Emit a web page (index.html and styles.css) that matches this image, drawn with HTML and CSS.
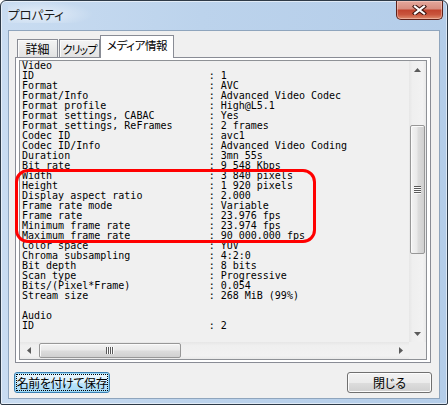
FILE: index.html
```html
<!DOCTYPE html>
<html lang="ja">
<head>
<meta charset="utf-8">
<title>プロパティ</title>
<link rel="stylesheet" href="styles.css">
</head>
<body>
<div class="window">
  <div class="titlebar">
    <span class="title">プロパティ</span>
    <div class="close">
      <svg width="15" height="10" viewBox="0 0 15 10"><path d="M3 1.5 L12 8.5 M12 1.5 L3 8.5" stroke="#3d1510" stroke-width="4.2" stroke-linecap="square" fill="none"/><path d="M3 1.5 L12 8.5 M12 1.5 L3 8.5" stroke="#fff" stroke-width="2.2" stroke-linecap="square" fill="none"/></svg>
    </div>
  </div>
  <div class="client">
    <div class="tabs">
      <div class="tab">詳細</div>
      <div class="tab narrow">クリップ</div>
      <div class="tab active">メディア情報</div>
    </div>
    <div class="panel">
      <div class="listbox">
        <div class="info">
          <div class="line">Video</div>
          <div class="line"><span class="k">ID</span>: 1</div>
          <div class="line"><span class="k">Format</span>: AVC</div>
          <div class="line"><span class="k">Format/Info</span>: Advanced Video Codec</div>
          <div class="line"><span class="k">Format profile</span>: High@L5.1</div>
          <div class="line"><span class="k">Format settings, CABAC</span>: Yes</div>
          <div class="line"><span class="k">Format settings, ReFrames</span>: 2 frames</div>
          <div class="line"><span class="k">Codec ID</span>: avc1</div>
          <div class="line"><span class="k">Codec ID/Info</span>: Advanced Video Coding</div>
          <div class="line"><span class="k">Duration</span>: 3mn 55s</div>
          <div class="line"><span class="k">Bit rate</span>: 9 548 Kbps</div>
          <div class="line"><span class="k">Width</span>: 3 840 pixels</div>
          <div class="line"><span class="k">Height</span>: 1 920 pixels</div>
          <div class="line"><span class="k">Display aspect ratio</span>: 2.000</div>
          <div class="line"><span class="k">Frame rate mode</span>: Variable</div>
          <div class="line"><span class="k">Frame rate</span>: 23.976 fps</div>
          <div class="line"><span class="k">Minimum frame rate</span>: 23.974 fps</div>
          <div class="line"><span class="k">Maximum frame rate</span>: 90 000.000 fps</div>
          <div class="line"><span class="k">Color space</span>: YUV</div>
          <div class="line"><span class="k">Chroma subsampling</span>: 4:2:0</div>
          <div class="line"><span class="k">Bit depth</span>: 8 bits</div>
          <div class="line"><span class="k">Scan type</span>: Progressive</div>
          <div class="line"><span class="k">Bits/(Pixel*Frame)</span>: 0.054</div>
          <div class="line"><span class="k">Stream size</span>: 268 MiB (99%)</div>
          <div class="line"></div>
          <div class="line">Audio</div>
          <div class="line"><span class="k">ID</span>: 2</div>
        </div>
        <div class="vscroll">
          <div class="arrow"><svg width="7" height="4" viewBox="0 0 7 4"><path d="M3.5 0 L7 4 L0 4 Z" fill="#5b5b5b"/></svg></div>
          <div class="vtrack"><div class="vthumb"><div class="vgrip"></div></div></div>
          <div class="arrow"><svg width="7" height="4" viewBox="0 0 7 4"><path d="M0 0 L7 0 L3.5 4 Z" fill="#5b5b5b"/></svg></div>
        </div>
        <div class="hscroll">
          <div class="arrow"><svg width="4" height="7" viewBox="0 0 4 7"><path d="M4 0 L4 7 L0 3.5 Z" fill="#5b5b5b"/></svg></div>
          <div class="htrack"><div class="hthumb"><div class="hgrip"></div></div></div>
          <div class="arrow"><svg width="4" height="7" viewBox="0 0 4 7"><path d="M0 0 L4 3.5 L0 7 Z" fill="#5b5b5b"/></svg></div>
        </div>
        <div class="corner"></div>
        <div class="mark"></div>
      </div>
    </div>
    <div class="buttons">
      <button class="btn focused"><span class="focus">名前を付けて保存</span></button>
      <button class="btn close-btn">閉じる</button>
    </div>
  </div>
</div>
</body>
</html>
```
FILE: styles.css
```css
* { box-sizing: border-box; }
html, body { margin: 0; padding: 0; background: #ffffff; }
body {
  width: 448px;
  height: 406px;
  overflow: hidden;
  font-family: "Noto Sans CJK JP", "Noto Sans", sans-serif;
  font-size: 12px;
  font-feature-settings: "palt";
  color: #000;
}
.window {
  width: 448px;
  height: 405px;
  border: 1px solid #2e3a47;
  border-radius: 6px 6px 2px 2px;
  background: linear-gradient(90deg, #c9dcf1 0%, #bcd3ec 45%, #b4cde9 100%);
  box-shadow: inset 0 0 0 1px rgba(255,255,255,0.55);
  padding: 0 7px 5px 7px;
  display: flex;
  flex-direction: column;
}
.titlebar {
  height: 29px;
  flex: none;
  display: flex;
  justify-content: space-between;
  align-items: flex-start;
}
.title {
  padding: 5px 30px 0 0;
  line-height: 17px;
  font-size: 12.5px;
  color: #1a1a1a;
  white-space: nowrap;
  background: radial-gradient(ellipse at 35% 60%, rgba(255,255,255,0.55) 0%, rgba(255,255,255,0) 70%);
}
.close {
  width: 47px;
  height: 19px;
  margin-right: -3px;
  border: 1px solid #5e2119;
  border-top: 0;
  border-radius: 0 0 5px 5px;
  background: linear-gradient(#e4a89c 0%, #d88e80 42%, #c2452f 52%, #c9553d 75%, #de8c6e 100%);
  box-shadow: inset 0 0 0 1px rgba(255,220,210,0.45);
  display: flex;
  align-items: center;
  justify-content: center;
}
.client {
  flex: 1;
  background: #f0f0f0;
  border: 1px solid #8fa5bd;
  padding: 4px 7px 0 5px;
  display: flex;
  flex-direction: column;
}
.tabs {
  height: 22px;
  flex: none;
  display: flex;
  align-items: flex-end;
  margin-left: 1px;
  padding-left: 2px;
}
.tab {
  height: 18px;
  border: 1px solid #898c95;
  border-bottom: 0;
  background: linear-gradient(#f4f4f4 0%, #ebebeb 50%, #e2e2e2 100%);
  box-shadow: inset 1px 1px 0 #fbfbfb;
  display: flex;
  align-items: center;
  justify-content: center;
  width: 41px;
  line-height: 14px;
  white-space: nowrap;
  font-size: 12px;
}
.tab:first-child { margin-right: 1px; }
.tab.narrow { font-size: 11px; letter-spacing: -0.9px; }
.tab.active {
  width: 74px;
  height: 23px;
  margin-bottom: -1px;
  background: #ffffff;
  box-shadow: none;
  position: relative;
  z-index: 1;
  padding-bottom: 5px;
  font-size: 11.5px;
  letter-spacing: -0.4px;
}
.panel {
  height: 306px;
  width: 416px;
  flex: none;
  margin-left: 1px;
  border: 1px solid #898c95;
  background: #ffffff;
  padding: 2px 3px;
}
.listbox {
  position: relative;
  height: 300px;
  width: 408px;
  border: 1px solid #8e9196;
  background: #f0f0f0;
  display: grid;
  grid-template-columns: 1fr 17px;
  grid-template-rows: 1fr 17px;
}
.info {
  overflow: hidden;
  padding-left: 2px;
  font-family: "DejaVu Sans Mono", "Liberation Mono", monospace;
  font-size: 10px;
  line-height: 10px;
  color: #000;
}
.line { height: 10px; white-space: pre; }
.k { display: inline-block; width: 31ch; }
.vscroll {
  display: flex;
  flex-direction: column;
  background: linear-gradient(90deg, #e6e6e6 0%, #efefef 20%, #f2f2f2 80%, #e9e9e9 100%);
}
.arrow {
  flex: none;
  width: 17px;
  height: 17px;
  display: flex;
  align-items: center;
  justify-content: center;
}
.vtrack { flex: 1; }
.vthumb {
  margin: 47px 0 0 1px;
  width: 15px;
  height: 129px;
  border: 1px solid #979797;
  border-radius: 2px;
  background: linear-gradient(90deg, #f3f3f3 0%, #e9e9e9 45%, #dcdcdc 55%, #d0d0d0 100%);
  box-shadow: inset 1px 1px 0 #fafafa;
  display: flex;
  align-items: center;
  justify-content: center;
}
.vgrip {
  width: 7px;
  height: 8px;
  background: repeating-linear-gradient(#5a5a5a 0 1px, #fbfbfb 1px 2px);
}
.hscroll {
  display: flex;
  background: linear-gradient(#e6e6e6 0%, #efefef 20%, #f2f2f2 80%, #e9e9e9 100%);
}
.htrack { flex: 1; }
.hthumb {
  margin: 1px 0 0 2px;
  width: 142px;
  height: 15px;
  border: 1px solid #979797;
  border-radius: 2px;
  background: linear-gradient(#f3f3f3 0%, #e9e9e9 45%, #dcdcdc 55%, #d0d0d0 100%);
  box-shadow: inset 1px 1px 0 #fafafa;
  display: flex;
  align-items: center;
  justify-content: center;
}
.hgrip {
  width: 8px;
  height: 7px;
  background: repeating-linear-gradient(90deg, #5a5a5a 0 1px, #fbfbfb 1px 2px);
}
.corner { background: #f0f0f0; }
.mark {
  position: absolute;
  left: -5px;
  top: 108px;
  width: 301px;
  height: 74px;
  border: 3px solid #ff0000;
  border-radius: 13px;
  pointer-events: none;
}
.buttons {
  margin-top: 9px;
  display: flex;
  justify-content: space-between;
}
.btn {
  height: 21px;
  margin: 0;
  padding: 0;
  font-family: "Noto Sans CJK JP", "Noto Sans", sans-serif;
  font-size: 12px;
  font-feature-settings: "palt";
  color: #000;
  border: 1px solid #707070;
  border-radius: 3px;
  background: linear-gradient(#f2f2f2 0%, #ebebeb 50%, #dddddd 51%, #cfcfcf 100%);
  box-shadow: inset 0 0 0 1px #fcfcfc;
  display: flex;
  align-items: center;
  justify-content: center;
  line-height: 14px;
  white-space: nowrap;
}
.btn.focused {
  width: 96px;
  border-color: #3c7fb1;
  background: linear-gradient(#eaf6fd 0%, #d9f0fc 50%, #bee6fd 51%, #a7d9f5 100%);
  box-shadow: inset 0 0 0 1px #9ad9f8;
  padding: 1px;
}
.focus {
  flex: 1;
  height: 17px;
  border: 1px dotted #000;
  display: flex;
  align-items: center;
  justify-content: center;
  white-space: nowrap;
  letter-spacing: -0.4px;
  overflow: hidden;
}
.close-btn { width: 85px; }
```
